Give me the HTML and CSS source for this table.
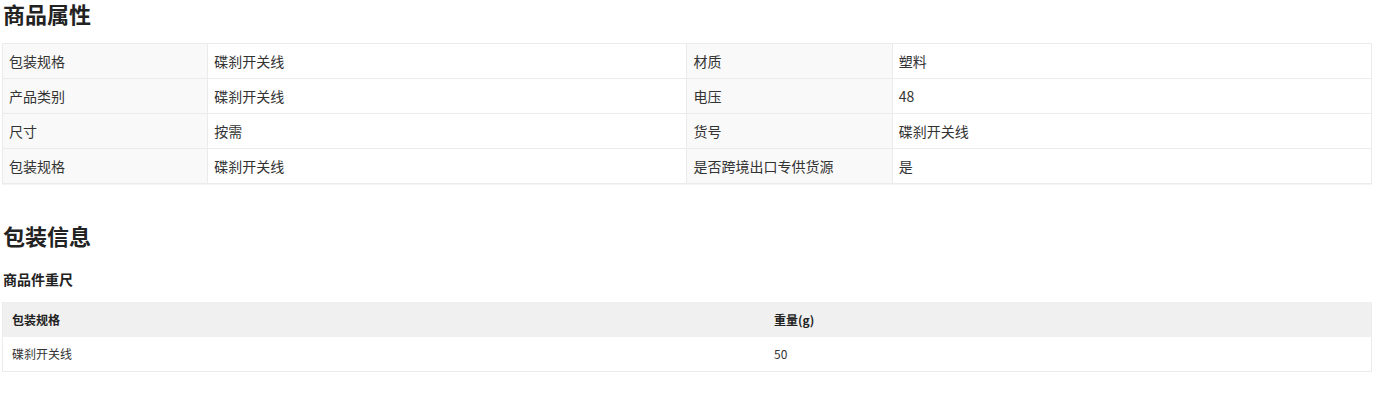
FILE: index.html
```html
<!DOCTYPE html>
<html lang="zh">
<head>
<meta charset="utf-8">
<link rel="stylesheet" href="styles.css">
</head>
<body>
<div class="page">
  <h2 class="title">商品属性</h2>
  <table class="attrs">
    <colgroup><col class="c-label"><col class="c-value"><col class="c-label"><col class="c-value"></colgroup>
    <tr><td class="label">包装规格</td><td>碟刹开关线</td><td class="label">材质</td><td>塑料</td></tr>
    <tr><td class="label">产品类别</td><td>碟刹开关线</td><td class="label">电压</td><td>48</td></tr>
    <tr><td class="label">尺寸</td><td>按需</td><td class="label">货号</td><td>碟刹开关线</td></tr>
    <tr><td class="label">包装规格</td><td>碟刹开关线</td><td class="label">是否跨境出口专供货源</td><td>是</td></tr>
  </table>

  <h2 class="title title-2">包装信息</h2>
  <h3 class="subtitle">商品件重尺</h3>
  <table class="pack">
    <colgroup><col class="p1"><col class="p2"></colgroup>
    <tr class="head"><th>包装规格</th><th>重量(g)</th></tr>
    <tr><td>碟刹开关线</td><td>50</td></tr>
  </table>
</div>
</body>
</html>
```
FILE: styles.css
```css
html, body {
  margin: 0;
  padding: 0;
  background: #fff;
}
body {
  font-family: "Noto Sans CJK SC", "Noto Sans", sans-serif;
  color: #333;
}
.page {
  padding: 1px 4px 0 2px;
}
.title {
  margin: 0 0 0 1px;
  font-size: 22px;
  line-height: 24px;
  font-weight: 700;
  color: #222;
}
.title-2 {
  margin-top: 39px;
}
.subtitle {
  margin: 22px 0 0 1px;
  font-size: 14px;
  line-height: 20px;
  font-weight: 700;
  color: #222;
}
table {
  width: 100%;
  border-collapse: collapse;
  table-layout: fixed;
}
.attrs {
  margin-top: 18px;
  border: 1px solid #ebebeb;
  box-shadow: 0 1px 1px rgba(0,0,0,0.04);
}
.attrs .c-label { width: 15%; }
.attrs .c-value { width: 35%; }
.attrs td {
  height: 34px;
  padding: 0 6px;
  border-bottom: 1px solid #ebebeb;
  border-right: 1px solid #ebebeb;
  font-size: 14px;
  line-height: 18px;
  vertical-align: middle;
  color: #333;
}
.attrs td.label {
  background: #f9f9f9;
}
.pack {
  margin-top: 13px;
  border-left: 1px solid #ebebeb;
  border-right: 1px solid #ebebeb;
  border-bottom: 1px solid #ebebeb;
}
.pack .p1 { width: 55.7%; }
.pack th, .pack td {
  height: 35px;
  padding: 0 9px;
  text-align: left;
  font-size: 12px;
  line-height: 16px;
  vertical-align: middle;
}
.pack th {
  background: #f0f0f0;
  font-weight: 700;
  color: #222;
}
.pack td {
  color: #333;
  height: 34px;
}
```
